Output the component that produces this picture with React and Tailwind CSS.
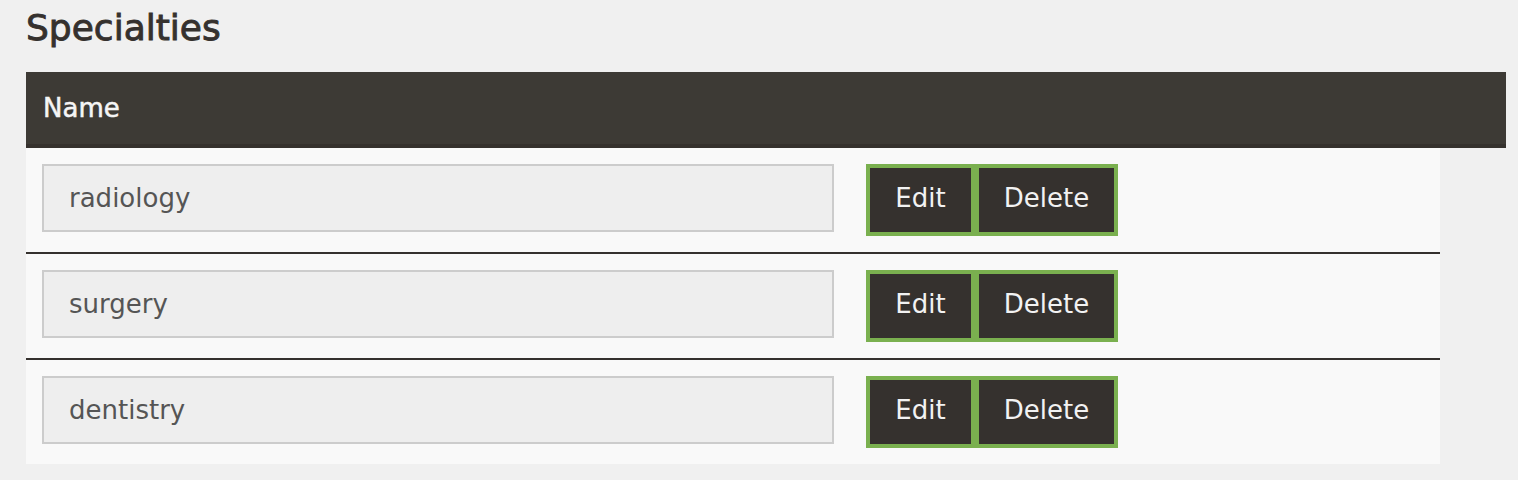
import React from "react";

const rows = ["radiology", "surgery", "dentistry"];

export default function App() {
  return (
    <div
      className="min-h-[480px] w-full bg-[#f0f0f0] pl-[26px] pt-[6px]"
      style={{ fontFamily: "'DejaVu Sans', 'Noto Sans', sans-serif" }}
    >
      <h1 className="m-0 text-[36px] font-normal leading-[44px] text-[#35312e] [-webkit-text-stroke:0.9px_#35312e]">
        Specialties
      </h1>
      <div className="mt-[22px] w-[1480px] h-[76px] bg-[#3d3a35] border-b-4 border-[#35312d] flex items-center pl-[17px]">
        <span className="text-[26px] text-[#f5f5f5] [-webkit-text-stroke:0.5px_#f5f5f5]">Name</span>
      </div>
      <div className="w-[1414px] bg-[#f9f9f9]">
        {rows.map((r, i) => (
          <div
            key={r}
            className={
              i < rows.length - 1
                ? "flex items-start py-4 pl-4 border-b-2 border-[#35312e]"
                : "flex items-start py-4 pl-4"
            }
          >
            <div className="w-[792px] h-[68px] border-2 border-[#cccccc] bg-[#eeeeee] flex items-center pl-[25px] text-[26px] text-[#555555]">
              {r}
            </div>
            <div className="ml-8 flex">
              <button className="h-[72px] w-[109px] border-4 border-[#7ab04f] bg-[#35312e] pb-1 text-[26px] text-[#f2f2f2]">
                Edit
              </button>
              <button className="h-[72px] w-[143px] border-4 border-[#7ab04f] bg-[#35312e] pb-1 text-[26px] text-[#f2f2f2]">
                Delete
              </button>
            </div>
          </div>
        ))}
      </div>
    </div>
  );
}
